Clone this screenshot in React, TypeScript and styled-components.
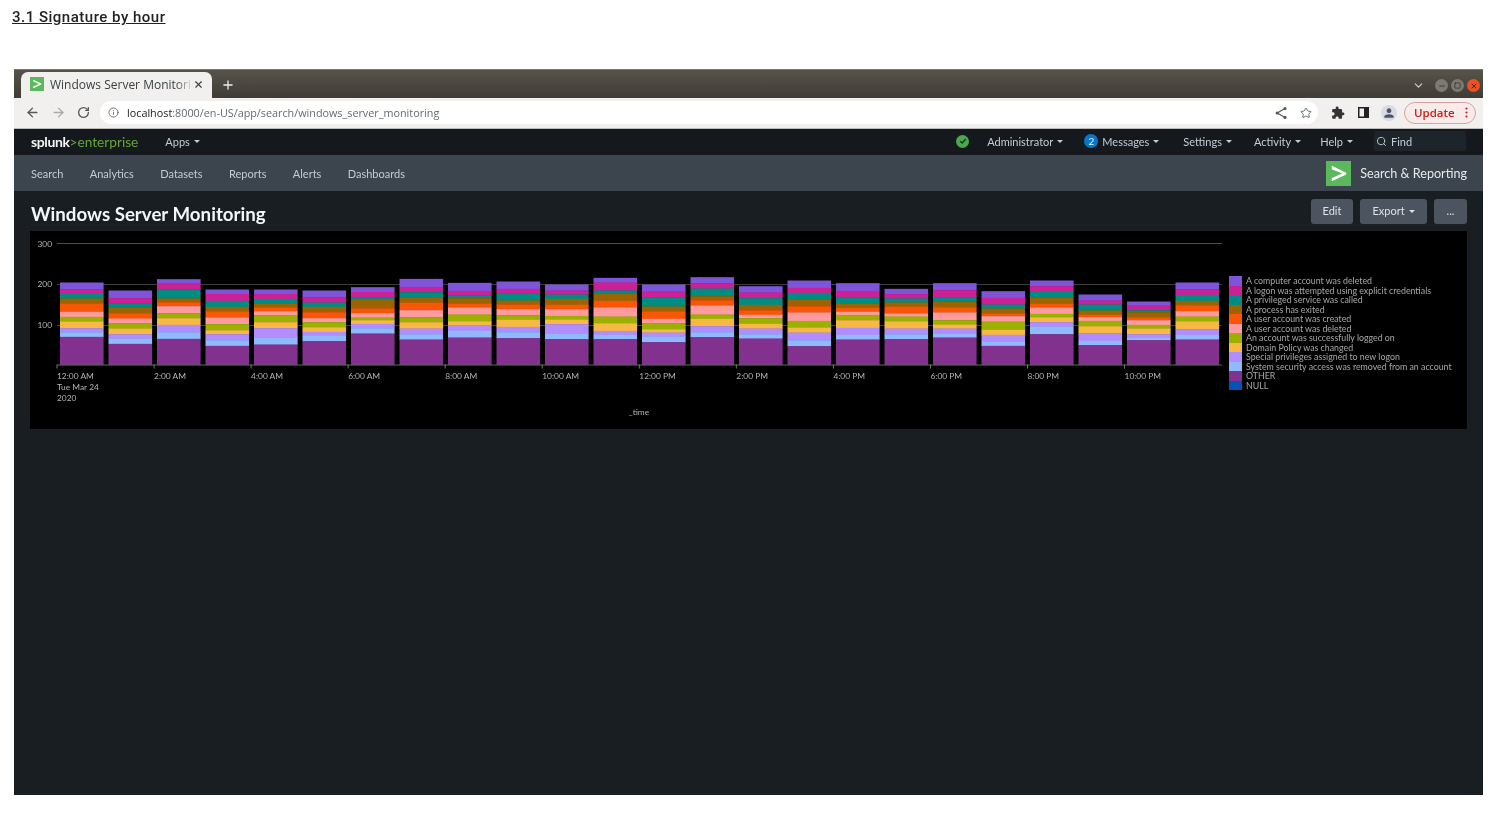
import React from 'react';
import styled, { createGlobalStyle } from 'styled-components';
import { ArrowLeft, ArrowRight, RotateCw, Info, Star, Search, X, Plus, ChevronDown, Minus, Square } from 'lucide-react';
import { MdExtension, MdPerson } from 'react-icons/md';

/* ---------- Data ---------- */
const SERIES = [
  { name: 'A computer account was deleted', color: '#7e55d8' },
  { name: 'A logon was attempted using explicit credentials', color: '#cb2196' },
  { name: 'A privileged service was called', color: '#008c80' },
  { name: 'A process has exited', color: '#9d6300' },
  { name: 'A user account was created', color: '#fa5607' },
  { name: 'A user account was deleted', color: '#ff9a9e' },
  { name: 'An account was successfully logged on', color: '#9cb000' },
  { name: 'Domain Policy was changed', color: '#f7b844' },
  { name: 'Special privileges assigned to new logon', color: '#b28dff' },
  { name: 'System security access was removed from an account', color: '#8fbaff' },
  { name: 'OTHER', color: '#82318f' },
  { name: 'NULL', color: '#0054b8' },
];

// segment heights top to bottom, in thirds of a pixel
const BARS = [
  [20, 14, 14, 15, 25, 15, 14, 20, 12, 14, 83],
  [23, 16, 13, 16, 16, 14, 16, 17, 13, 16, 62],
  [13, 17, 28, 11, 12, 21, 15, 20, 22, 20, 77],
  [13, 21, 18, 13, 19, 20, 18, 12, 18, 17, 56],
  [13, 15, 14, 12, 11, 12, 21, 18, 27, 22, 60],
  [20, 16, 13, 16, 18, 12, 15, 14, 12, 16, 70],
  [14, 17, 7, 26, 14, 13, 8, 11, 13, 16, 93],
  [24, 16, 15, 17, 22, 21, 15, 19, 17, 16, 75],
  [24, 14, 8, 17, 11, 21, 20, 12, 17, 20, 81],
  [22, 14, 21, 12, 14, 18, 14, 21, 16, 18, 79],
  [18, 12, 13, 18, 13, 20, 11, 14, 27, 18, 76],
  [14, 24, 9, 22, 20, 27, 20, 23, 12, 13, 76],
  [21, 18, 27, 14, 23, 13, 18, 10, 12, 17, 67],
  [18, 16, 23, 12, 16, 27, 13, 22, 18, 15, 82],
  [19, 17, 20, 16, 14, 10, 17, 14, 17, 13, 78],
  [22, 15, 19, 21, 19, 25, 20, 15, 23, 18, 55],
  [23, 20, 18, 13, 12, 9, 16, 23, 21, 14, 75],
  [16, 13, 12, 12, 21, 9, 14, 22, 17, 15, 76],
  [21, 22, 12, 17, 16, 23, 13, 12, 14, 13, 81],
  [20, 20, 12, 14, 9, 16, 25, 15, 19, 14, 56],
  [17, 17, 17, 19, 11, 19, 10, 15, 13, 23, 91],
  [18, 12, 18, 13, 7, 11, 16, 21, 23, 13, 58],
  [12, 14, 6, 15, 9, 14, 11, 17, 9, 9, 73],
  [20, 17, 18, 13, 18, 16, 14, 24, 17, 14, 75],
];

const TICKS = ['12:00 AM', '2:00 AM', '4:00 AM', '6:00 AM', '8:00 AM', '10:00 AM', '12:00 PM', '2:00 PM', '4:00 PM', '6:00 PM', '8:00 PM', '10:00 PM'];
const NAV = ['Search', 'Analytics', 'Datasets', 'Reports', 'Alerts', 'Dashboards'];

/* ---------- Styled Components ---------- */
const Global = createGlobalStyle`
  html, body { margin: 0; padding: 0; background: #fff; overflow: hidden; }
`;

const Page = styled.div`
  width: 1495px;
  height: 817px;
  padding: 9px 12px 0 14px;
  box-sizing: border-box;
  font-family: 'Lato', sans-serif;
`;

const Heading = styled.h3`
  margin: 0 0 43px -2px;
  font: 500 15px/17px 'Roboto', sans-serif;
  letter-spacing: 0.5px;
  color: #222;
  text-decoration: underline;
  filter: blur(0.3px);
`;

const Browser = styled.div`
  width: 1469px;
  height: 726px;
  display: flex;
  flex-direction: column;
  background: #191e22;
  filter: blur(0.3px);
`;

const TabStrip = styled.div`
  height: 29px;
  flex: none;
  display: flex;
  align-items: flex-end;
  padding: 0 3px 0 7px;
  background: linear-gradient(#57534a, #3f3c36);
  border-top: 1px solid #777;
  box-sizing: border-box;
`;

const Tab = styled.div`
  width: 191px;
  height: 26px;
  display: flex;
  align-items: center;
  padding: 0 8px 2px 9px;
  box-sizing: border-box;
  background: #f1f0ee;
  border-radius: 7px 7px 0 0;
  font: 12px 'Open Sans', sans-serif;
  color: #3c4043;
  svg { flex: none; }
`;

const TabTitle = styled.span`
  margin-left: 6px;
  flex: 1;
  overflow: hidden;
  white-space: nowrap;
  mask-image: linear-gradient(to right, #000 88%, transparent);
`;

const NewTab = styled.span`
  display: flex;
  margin: 0 0 6px 9px;
  color: #eee;
`;

const WindowControls = styled.div`
  margin: 0 0 6px auto;
  display: flex;
  align-items: center;
  gap: 3px;
  color: #ccc;
`;

const WinButton = styled.span<{ $close?: boolean }>`
  width: 13px;
  height: 13px;
  border-radius: 50%;
  display: flex;
  align-items: center;
  justify-content: center;
  background: ${(p) => (p.$close ? '#e95420' : '#7d7a72')};
  color: ${(p) => (p.$close ? '#5a2310' : '#3f3c36')};
`;

const TabMenu = styled.span`
  display: flex;
  margin-right: 7px;
`;

const Toolbar = styled.div`
  height: 31px;
  flex: none;
  display: flex;
  align-items: center;
  padding: 0 7px 1px 11px;
  box-sizing: border-box;
  background: #f1f0ee;
  border-bottom: 1px solid #bbb;
  color: #55585c;
`;

const NavIcons = styled.div`
  display: flex;
  align-items: center;
  gap: 11px;
  width: 75px;
  flex: none;
`;

const AddressPill = styled.div`
  width: 1218px;
  height: 23px;
  flex: none;
  display: flex;
  align-items: center;
  padding: 0 6px 0 8px;
  box-sizing: border-box;
  background: #fff;
  border-radius: 12px;
  font: 10.8px 'Open Sans', sans-serif;
  color: #666a6e;
`;

const Host = styled.span`
  margin-left: 8px;
  color: #222;
`;

const PillEnd = styled.div`
  margin-left: auto;
  display: flex;
  align-items: center;
  gap: 13px;
`;

const ToolIcons = styled.div`
  display: flex;
  align-items: center;
  gap: 12.5px;
  margin-left: 13px;
  color: #333;
`;

const Avatar = styled.span`
  width: 16px;
  height: 16px;
  border-radius: 50%;
  display: flex;
  align-items: center;
  justify-content: center;
  background: #d7dbe3;
  color: #4a5568;
`;

const UpdateButton = styled.span`
  margin-left: 7px;
  width: 72px;
  height: 22px;
  display: flex;
  align-items: center;
  justify-content: space-between;
  padding: 0 7px 0 9px;
  box-sizing: border-box;
  border: 1px solid #d8a5a2;
  border-radius: 11px;
  background: #f9ebe9;
  color: #c5221f;
  font: 600 11.5px 'Open Sans', sans-serif;
`;

const SplunkBar = styled.div`
  height: 26px;
  flex: none;
  display: flex;
  align-items: center;
  padding: 0 17px 2px 17px;
  box-sizing: border-box;
  background: #15191d;
  font-size: 11px;
  color: #c3cbd4;
`;

const Logo = styled.span`
  font: 700 14px 'Lato', sans-serif;
  letter-spacing: -0.4px;
  color: #f5f5f5;
  margin-right: 27px;
`;

const LogoAccent = styled.span`
  font-size: 13.7px;
  font-weight: 400;
  letter-spacing: 0;
  color: #65a637;
`;

const Caret = styled.i`
  display: inline-block;
  margin-left: 4px;
  vertical-align: 2px;
  border: 3px solid transparent;
  border-top: 3px solid currentColor;
  border-bottom: 0;
`;

const BarRight = styled.div`
  margin-left: auto;
  display: flex;
  align-items: center;
`;

const BarItem = styled.span<{ $gap: number }>`
  display: flex;
  align-items: center;
  margin-right: ${(p) => p.$gap}px;
`;

const StatusDot = styled.span`
  width: 13px;
  height: 13px;
  margin-right: 18px;
  border-radius: 50%;
  display: flex;
  align-items: center;
  justify-content: center;
  background: #4aa94d;
`;

const Count = styled.span`
  width: 14px;
  height: 14px;
  margin-right: 4px;
  border-radius: 50%;
  text-align: center;
  line-height: 14px;
  background: #0877c9;
  color: #e8f3fb;
  font-size: 10px;
`;

const FindBox = styled.div`
  width: 92px;
  height: 20px;
  display: flex;
  align-items: center;
  gap: 4px;
  padding-left: 2px;
  box-sizing: border-box;
  background: #1e252a;
  border-radius: 2px;
`;

const AppBar = styled.div`
  height: 36px;
  flex: none;
  display: flex;
  align-items: center;
  gap: 26.4px;
  padding: 0 16px 0 17px;
  background: #3c444d;
  font-size: 11px;
  color: #c3cbd4;
`;

const AppName = styled.div`
  margin-left: auto;
  display: flex;
  align-items: center;
  gap: 9px;
  font-size: 12.6px;
  color: #e6e9ec;
`;

const DashHeader = styled.div`
  height: 40px;
  flex: none;
  display: flex;
  align-items: center;
  justify-content: space-between;
  padding: 0 16px 0 17px;
  box-sizing: border-box;
`;

const DashTitle = styled.h1`
  margin: 6px 0 0;
  font: 700 18.7px 'Lato', sans-serif;
  color: #f4f6f8;
`;

const Actions = styled.div`
  display: flex;
  gap: 7px;
  margin-top: 1px;
`;

const ActionButton = styled.button<{ $w: number }>`
  width: ${(p) => p.$w}px;
  height: 25px;
  padding: 0 0 2px;
  border: 0;
  border-radius: 3px;
  background: #4c555f;
  color: #dde1e5;
  font: 11px 'Lato', sans-serif;
`;

const Panel = styled.div`
  margin: 0 16px;
  height: 198px;
  display: flex;
  background: #000;
`;

const ChartSvg = styled.svg`
  width: 1199px;
  height: 198px;
  flex: none;
  text {
    font-family: 'Lato', sans-serif;
    font-size: 8.4px;
    fill: #b4b4b4;
  }
`;

const Legend = styled.ul`
  margin: 45px 0 0;
  padding: 0;
  list-style: none;
`;

const LegendRow = styled.li`
  height: 9.5px;
  display: flex;
  align-items: center;
  font-size: 8.8px;
  white-space: nowrap;
  color: #a8a8a8;
`;

const Swatch = styled.i<{ $color: string }>`
  width: 13px;
  height: 9.5px;
  margin-right: 4px;
  background: ${(p) => p.$color};
`;

/* ---------- Small drawings ---------- */
const SplunkMark = ({ size }: { size: number }) => (
  <svg width={size} height={size} viewBox="0 0 26 26">
    <rect width="26" height="26" fill="#5cb85c" />
    <path d="M6 5 L21 12.2 V14 L6 21 V17.6 L17 13 L6 8.5 Z" fill="#fff" />
  </svg>
);

const ShareIcon = () => (
  <svg width="12" height="12" viewBox="0 0 12 12" fill="none" stroke="#55585c" strokeWidth="1.2">
    <path d="M10 1.5 L2.2 6 L10 10.5" />
    <circle cx="2.2" cy="6" r="1" fill="#55585c" />
    <circle cx="10" cy="1.6" r="1" fill="#55585c" />
    <circle cx="10" cy="10.4" r="1" fill="#55585c" />
  </svg>
);

const SidePanelIcon = () => (
  <svg width="11" height="11" viewBox="0 0 11 11">
    <rect x="0.75" y="0.75" width="9.5" height="9.5" fill="none" stroke="#222" strokeWidth="1.5" />
    <rect x="6" y="1" width="4" height="9" fill="#222" />
  </svg>
);

const Kebab = () => (
  <svg width="3" height="11" viewBox="0 0 3 11" fill="#c5221f">
    <circle cx="1.5" cy="1.5" r="1.1" />
    <circle cx="1.5" cy="5.5" r="1.1" />
    <circle cx="1.5" cy="9.5" r="1.1" />
  </svg>
);

const Check = () => (
  <svg width="8" height="8" viewBox="0 0 8 8" fill="none" stroke="#12351a" strokeWidth="1.3">
    <path d="M1.2 4.2 L3.2 6 L6.8 2" />
  </svg>
);

/* ---------- Chart ---------- */
const BASE_Y = 133.5;
const Chart = () => (
  <ChartSvg viewBox="0 0 1199 198">
    {[12, 53, 94].map((y) => (
      <line key={y} x1="27" x2="1192" y1={y + 0.5} y2={y + 0.5} stroke={y === 12 ? '#4d4d4d' : '#3d3d3d'} />
    ))}
    {['300', '200', '100'].map((label, i) => (
      <text key={label} x="22" y={15.5 + i * 40.8} textAnchor="end">{label}</text>
    ))}
    {BARS.map((segments, b) => {
      const x = 30 + b * 48.5;
      let y = BASE_Y - segments.reduce((a, s) => a + s, 0) / 3;
      return segments.map((s, i) => {
        const rect = <rect key={`${b}-${i}`} x={x} y={y} width="43.6" height={s / 3 + 0.4} fill={SERIES[i].color} />;
        y += s / 3;
        return rect;
      });
    })}
    <line x1="27" x2="1192" y1={BASE_Y + 0.5} y2={BASE_Y + 0.5} stroke="#666" />
    {TICKS.map((label, i) => {
      const x = 27 + i * 97.05;
      return (
        <g key={label}>
          <line x1={x} x2={x} y1={BASE_Y} y2={BASE_Y + 4} stroke="#777" />
          <text x={x} y="148">{label}</text>
        </g>
      );
    })}
    <text x="27" y="159">Tue Mar 24</text>
    <text x="27" y="170">2020</text>
    <text x="609" y="184" textAnchor="middle">_time</text>
  </ChartSvg>
);

/* ---------- Main Component ---------- */
function App() {
  return (
    <Page>
      <Global />
      <Heading>3.1 Signature by hour</Heading>
      <Browser>
        <TabStrip>
          <Tab>
            <SplunkMark size={14} />
            <TabTitle>Windows Server Monitoring</TabTitle>
            <X size={11} strokeWidth={2.5} />
          </Tab>
          <NewTab><Plus size={14} strokeWidth={2.2} /></NewTab>
          <WindowControls>
            <TabMenu><ChevronDown size={13} strokeWidth={2.2} /></TabMenu>
            <WinButton><Minus size={8} strokeWidth={3} /></WinButton>
            <WinButton><Square size={7} strokeWidth={3} /></WinButton>
            <WinButton $close><X size={8} strokeWidth={3} /></WinButton>
          </WindowControls>
        </TabStrip>
        <Toolbar>
          <NavIcons>
            <ArrowLeft size={15} strokeWidth={2.2} />
            <ArrowRight size={15} strokeWidth={2.2} color="#a9abad" />
            <RotateCw size={13} strokeWidth={2.4} />
          </NavIcons>
          <AddressPill>
            <Info size={11} />
            <Host>localhost</Host>:8000/en-US/app/search/windows_server_monitoring
            <PillEnd>
              <ShareIcon />
              <Star size={12} />
            </PillEnd>
          </AddressPill>
          <ToolIcons>
            <MdExtension size={14} />
            <SidePanelIcon />
            <Avatar><MdPerson size={14} /></Avatar>
          </ToolIcons>
          <UpdateButton>Update<Kebab /></UpdateButton>
        </Toolbar>
        <SplunkBar>
          <Logo>splunk<LogoAccent>&gt;enterprise</LogoAccent></Logo>
          Apps<Caret />
          <BarRight>
            <StatusDot><Check /></StatusDot>
            <BarItem $gap={21}>Administrator<Caret /></BarItem>
            <BarItem $gap={24}><Count>2</Count>Messages<Caret /></BarItem>
            <BarItem $gap={22}>Settings<Caret /></BarItem>
            <BarItem $gap={19}>Activity<Caret /></BarItem>
            <BarItem $gap={21}>Help<Caret /></BarItem>
            <FindBox><Search size={11} />Find</FindBox>
          </BarRight>
        </SplunkBar>
        <AppBar>
          {NAV.map((item) => <span key={item}>{item}</span>)}
          <AppName><SplunkMark size={25} />Search &amp; Reporting</AppName>
        </AppBar>
        <DashHeader>
          <DashTitle>Windows Server Monitoring</DashTitle>
          <Actions>
            <ActionButton $w={42}>Edit</ActionButton>
            <ActionButton $w={67}>Export<Caret /></ActionButton>
            <ActionButton $w={33}>...</ActionButton>
          </Actions>
        </DashHeader>
        <Panel>
          <Chart />
          <Legend>
            {SERIES.map((s) => (
              <LegendRow key={s.name}><Swatch $color={s.color} />{s.name}</LegendRow>
            ))}
          </Legend>
        </Panel>
      </Browser>
    </Page>
  );
}

export default App;
